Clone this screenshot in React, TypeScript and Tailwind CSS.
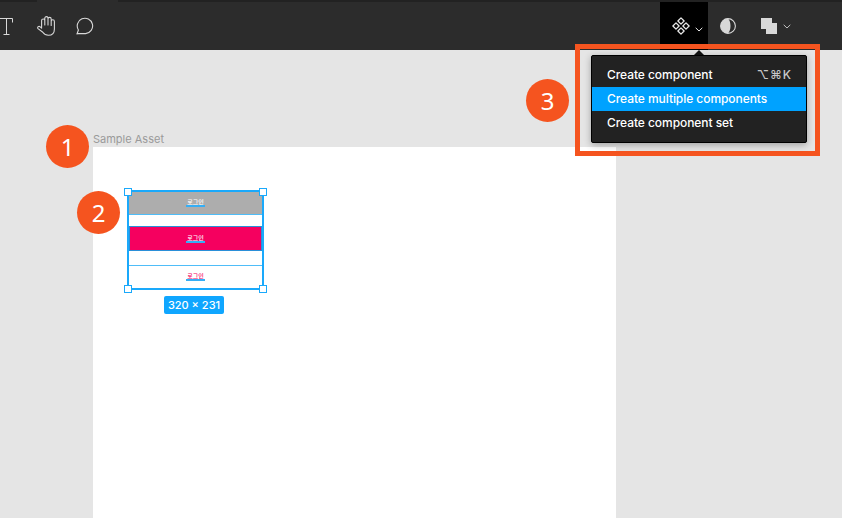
import React from "react";

const font = { fontFamily: "Inter, 'Liberation Sans', sans-serif" };

function Badge({ n, className }: { n: number; className: string }) {
  return (
    <div
      className={`absolute flex h-[43px] w-[43px] items-center justify-center rounded-full bg-[#f5541f] text-[24px] leading-none font-normal text-white ${className}`}
      style={{ fontFamily: "'Noto Sans', sans-serif" }}
    >
      {n}
    </div>
  );
}

function Handle({ className }: { className: string }) {
  return <div className={`absolute h-[8px] w-[8px] border-[1.5px] border-[#1aa9fb] bg-white ${className}`} />;
}

function Chevron() {
  return (
    <svg width="8" height="5" viewBox="0 0 8 5" fill="none" stroke="currentColor" strokeWidth="1">
      <path d="M.7 .8l3.300 3.200L7.300 .8" />
    </svg>
  );
}

function LoginLabel({ className }: { className: string }) {
  return (
    <span
      className={`border-b-2 border-[#35aef5] px-[1px] text-[6px] leading-[6px] font-medium ${className}`}
      style={{ fontFamily: "'Noto Sans CJK KR', sans-serif" }}
    >
      로그인
    </span>
  );
}

export default function App() {
  return (
    <div className="relative h-[518px] w-[842px] overflow-hidden bg-[#e5e5e5]" style={font}>
      {/* Toolbar */}
      <div className="flex h-[50px] flex-col bg-[#2c2c2c] text-[#d8d8d8]">
        <div className="flex h-[2px]">
          <div className="w-[37px] bg-[#222222]" />
          <div className="w-[81px]" />
          <div className="flex-1 bg-[#222222]" />
        </div>
        <div className="flex flex-1 items-stretch">
          <div className="flex items-center">
            <svg width="13" height="17" viewBox="0 0 13 17" fill="none" stroke="currentColor" strokeWidth="1">
              <path d="M0 .5h12.500v4M6.500 .5v16M3.500 16.500h6" />
            </svg>
            <svg width="18" height="20" viewBox="0 0 18 20" fill="none" stroke="currentColor" strokeWidth="1.1" strokeLinejoin="round" strokeLinecap="round" className="ml-[24px]">
              <path d="M4.600 11.500V4.600a1.600 1.600 0 0 1 3.200 0V9M7.800 9V2.200a1.600 1.600 0 0 1 3.200 0V9M11 9V3a1.600 1.600 0 0 1 3.200 0v6.500M14.200 9.500V5.400a1.600 1.600 0 0 1 3.200 0V13c0 4-2.500 6.300-6 6.300-2.800 0-4.200-1-5.600-3L1 12.600c-1-1.500.8-3 2.200-1.800l1.400 1.400" />
            </svg>
            <svg width="18" height="18" viewBox="0 0 18 18" fill="none" stroke="currentColor" strokeWidth="1.1" strokeLinejoin="round" className="ml-[21px]">
              <path d="M1 17l1.400-4A7.700 7.700 0 1 1 9.600 16.600H1z" />
            </svg>
          </div>

          <div className="ml-auto flex items-stretch pr-[51px]">
            <div className="flex w-[48px] items-center bg-black pl-[12px]">
              <svg width="18" height="18" viewBox="0 0 18 18" fill="none" stroke="#e8e8e8" strokeWidth="1.300" strokeLinejoin="round">
                <path d="M9 .9l3.100 3.100L9 7.100 5.900 4zM9 10.900l3.100 3.100L9 17.100 5.900 14zM4 5.900L7.100 9 4 12.100 .9 9zM14 5.900L17.100 9 14 12.100 10.900 9z" />
              </svg>
              <span className="mt-[6px] ml-[5px] text-[#e8e8e8]">
                <Chevron />
              </span>
            </div>
            <div className="flex w-[40px] items-center justify-center">
              <svg width="16" height="16" viewBox="0 0 16 16">
                <circle cx="8" cy="8" r="7.400" fill="none" stroke="#d8d8d8" strokeWidth="1.100" />
                <path d="M8 .6A7.400 7.400 0 0 0 8 15.400C9.600 14 10.500 11 10.500 8S9.600 2 8 .6z" fill="#d8d8d8" />
              </svg>
            </div>
            <div className="flex items-center pl-[13px]">
              <svg width="16" height="16" viewBox="0 0 16 16" fill="#d8d8d8">
                <path d="M0 0h11v5h5v11H5v-5H0z" />
              </svg>
              <span className="ml-[6px] text-[#c0c0c0]">
                <Chevron />
              </span>
            </div>
          </div>
        </div>
      </div>

      {/* Canvas frame */}
      <div className="absolute top-[133px] left-[93px] text-[11px] leading-[13px] text-[#9a9a9a]">Sample Asset</div>
      <div className="absolute top-[147px] left-[93px] h-[371px] w-[523px] bg-white" />

      {/* Selection */}
      <div className="absolute top-[190px] left-[127px] flex h-[100px] w-[137px] flex-col border-2 border-[#1aa9fb]">
        <div className="flex h-[23px] items-center justify-center border-b border-[#4fbdf8] bg-[#adadad]">
          <LoginLabel className="text-white" />
        </div>
        <div className="mt-[11px] flex h-[25px] items-center justify-center border border-[#2a8fd8] bg-[#f5005f]">
          <LoginLabel className="text-white" />
        </div>
        <div className="mt-[14px] flex flex-1 items-center justify-center border-t border-[#4fbdf8] bg-white">
          <LoginLabel className="text-[#f5005f]" />
        </div>
        <Handle className="-top-[4px] -left-[5px]" />
        <Handle className="-top-[4px] -right-[5px]" />
        <Handle className="-bottom-[5px] -left-[5px]" />
        <Handle className="-right-[5px] -bottom-[5px]" />
      </div>
      <div className="absolute top-[296px] left-[164px] flex h-[18px] w-[60px] items-center justify-center rounded-[2px] bg-[#0fa6ff] text-[11px] font-medium text-white">
        320 × 231
      </div>

      {/* Annotations */}
      <Badge n={1} className="top-[125px] left-[46px]" />
      <Badge n={2} className="top-[191px] left-[77px]" />
      <Badge n={3} className="top-[79px] left-[526px]" />
      <div className="absolute top-[44px] left-[575px] h-[112px] w-[245px] border-[5px] border-[#f5541f]" />

      {/* Menu */}
      <div className="absolute top-[55px] left-[591px] w-[216px] rounded-[2px] border border-black bg-[#222222] py-[7px] text-[12px] font-medium tracking-[-0.005em] text-white shadow-[0_2px_7px_rgba(0,0,0,0.3)]">
        <div className="absolute -top-[6px] left-[102px] h-0 w-0 border-x-[5px] border-b-[5px] border-x-transparent border-b-[#111111]" />
        <div className="flex h-[24px] items-center justify-between pr-[14px] pl-[15px]">
          <span>Create component</span>
          <span className="tracking-[0.08em] text-[#c8c8c8]">⌥⌘K</span>
        </div>
        <div className="flex h-[24px] items-center bg-[#00a2ff] pl-[15px]">Create multiple components</div>
        <div className="flex h-[24px] items-center pl-[15px]">Create component set</div>
      </div>
    </div>
  );
}
